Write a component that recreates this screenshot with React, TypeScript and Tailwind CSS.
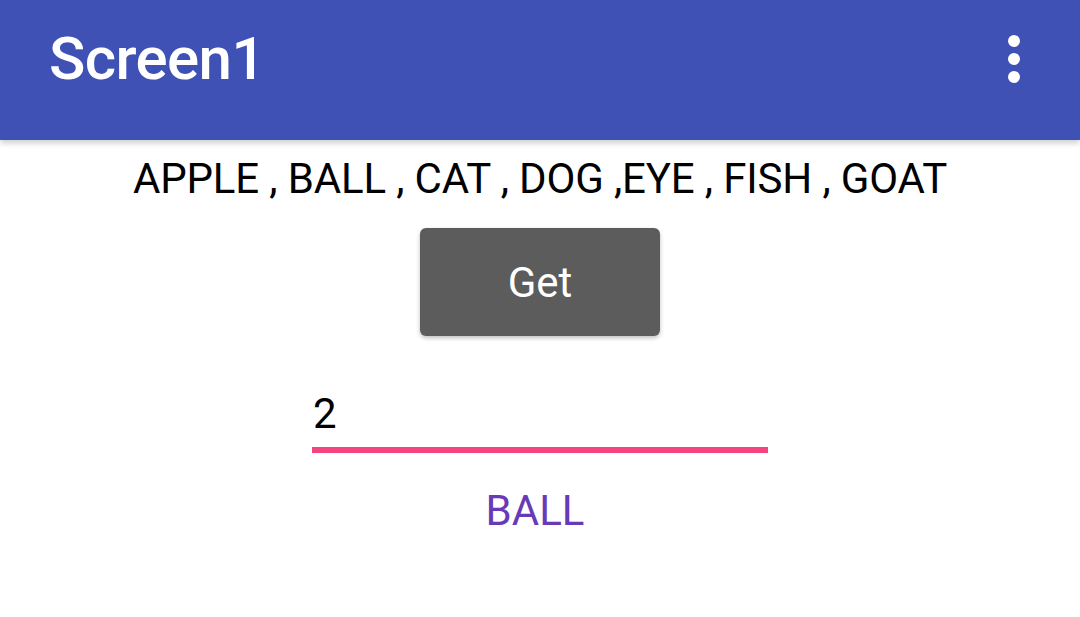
import React from "react";

export default function App() {
  return (
    <div className="w-[1080px] h-[617px] bg-white overflow-hidden relative" style={{ fontFamily: "Roboto, 'Noto Sans', sans-serif" }}>
      <div className="h-[140px] bg-[#3f51b5] flex items-center justify-between pl-[49px] pr-[66px] shadow-[0_3px_6px_rgba(0,0,0,0.2)] relative z-10">
        <div className="text-white text-[60px] font-medium leading-none -mt-[22px] tracking-[-0.6px]">Screen1</div>
        <div className="flex flex-col gap-[6px] -mt-[22px] mr-[-6px]">
          <div className="w-[12px] h-[12px] rounded-full bg-white" />
          <div className="w-[12px] h-[12px] rounded-full bg-white" />
          <div className="w-[12px] h-[12px] rounded-full bg-white" />
        </div>
      </div>
      <div className="flex flex-col items-center">
        <div className="mt-[14px] text-[42px] leading-[49px] text-black tracking-[-0.15px]">APPLE , BALL , CAT , DOG ,EYE , FISH , GOAT</div>
        <button className="mt-[25px] w-[240px] h-[108px] rounded-[6px] bg-[#5c5c5d] text-white text-[42px] shadow-[0_2px_4px_rgba(0,0,0,0.25)] flex items-center justify-center">Get</button>
        <div className="mt-[53px] w-[456px] ml-[0px]">
          <div className="text-[42px] leading-[49px] text-black pl-[1px]">2</div>
          <div className="mt-[9px] h-[6px] bg-[#f4457f]" />
        </div>
        <div className="mt-[33px] text-[42px] leading-[49px] text-[#673ab7] -ml-[10px]">BALL</div>
      </div>
    </div>
  );
}
